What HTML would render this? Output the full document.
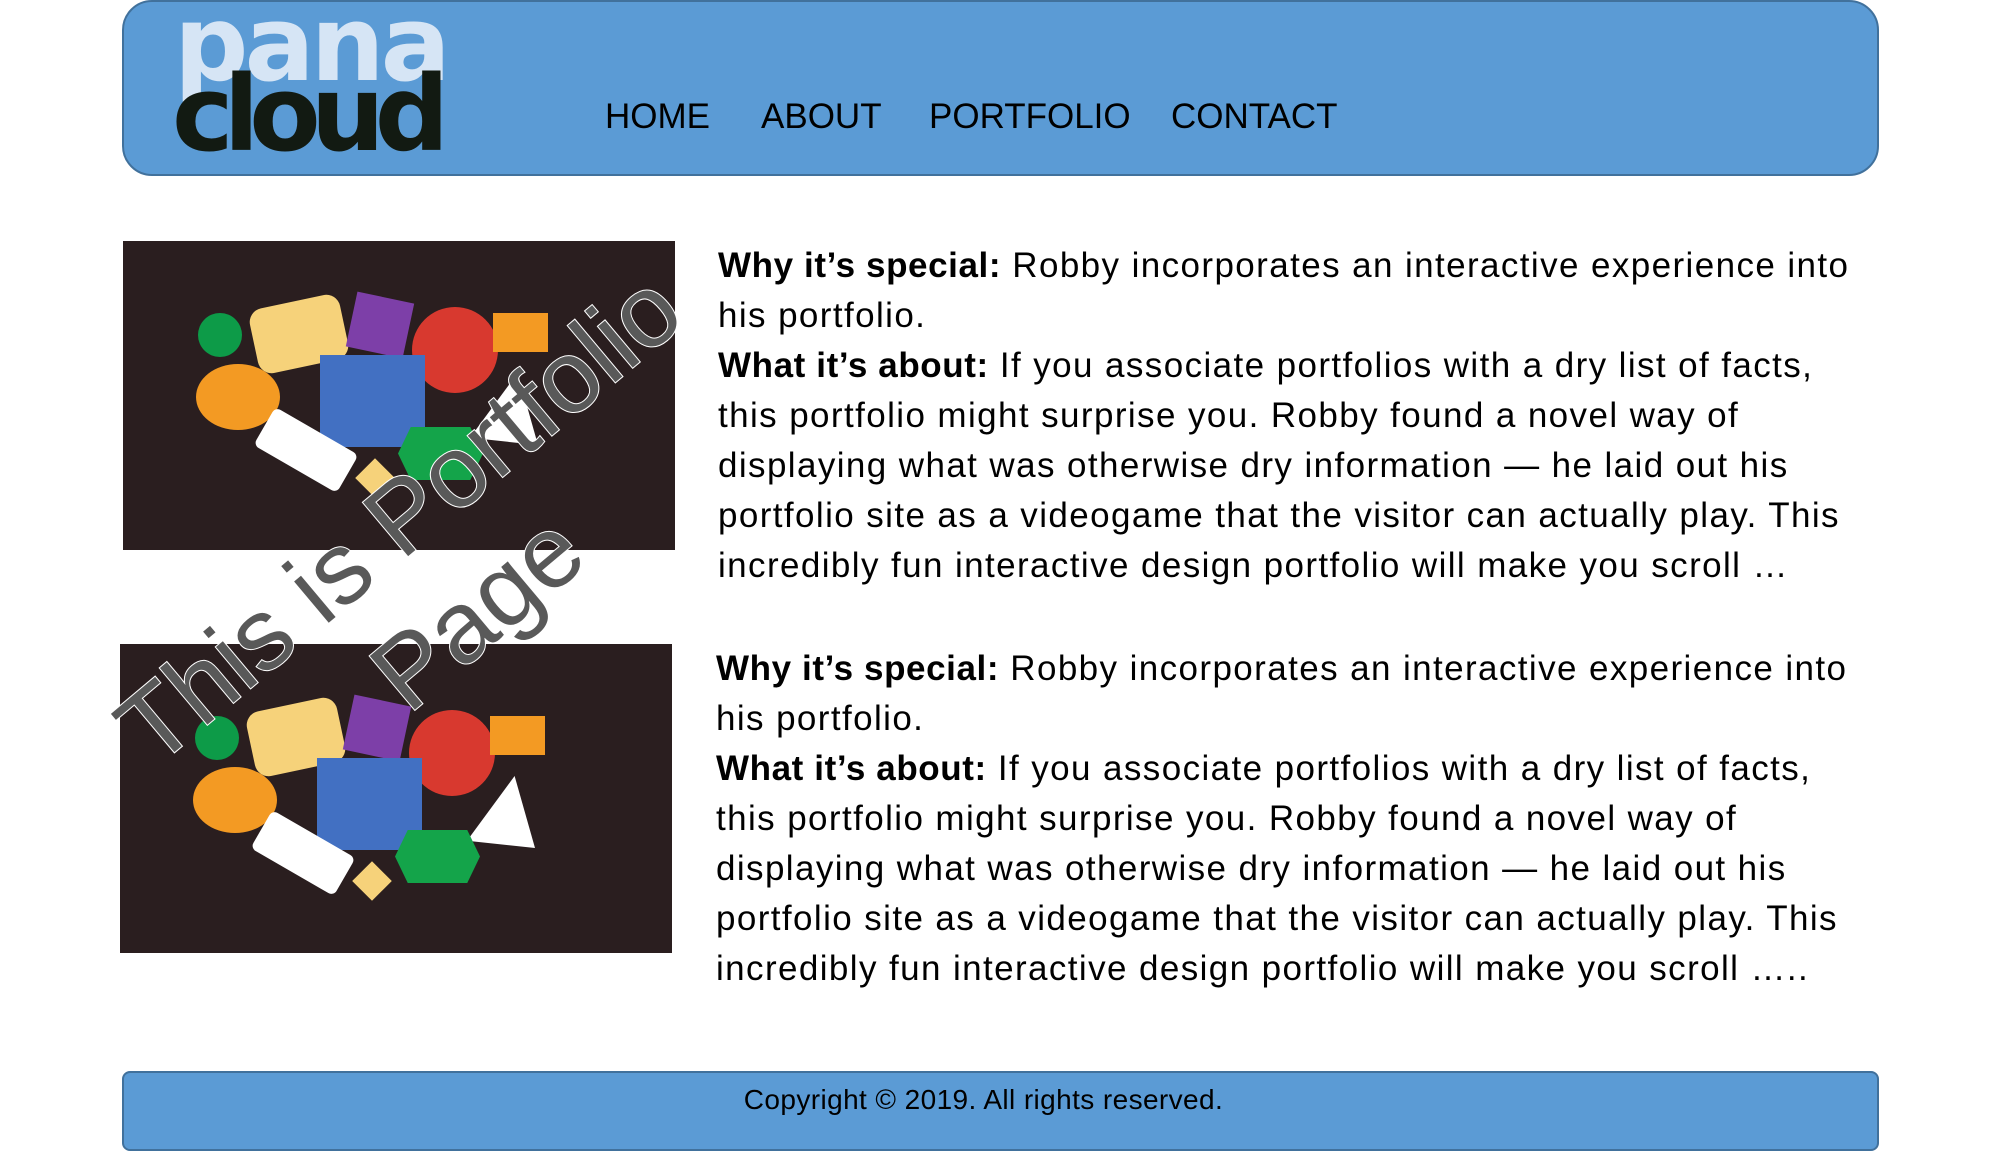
<!DOCTYPE html>
<html><head><meta charset="utf-8"><style>
*{margin:0;padding:0;box-sizing:border-box}
body{width:2000px;height:1125px;background:#fff;position:relative;overflow:hidden;font-family:"Liberation Sans",sans-serif;color:#000}
.hdr{position:absolute;left:122px;top:0;width:1757px;height:176px;background:#5b9bd5;border:2px solid #41719c;border-radius:30px}
.logo1,.logo2{position:absolute;font-family:"DejaVu Sans",sans-serif;font-weight:bold;line-height:1}
.logo1{left:174px;top:-8px;font-size:104px;color:#d6e5f5;letter-spacing:-4px}
.logo2{left:172px;top:62px;font-size:104px;color:#121a12;letter-spacing:-10px}
.nav{position:absolute;top:97px;font-size:35px;color:#000}
.img{position:absolute;width:552px;height:309px;background:#2a1e1f;overflow:hidden}
.img div{position:absolute}
.txt{position:absolute;font-size:35px;line-height:50px;white-space:nowrap;letter-spacing:1.4px}
.txt b{font-weight:bold;letter-spacing:0.6px}
.wm{position:absolute;left:438px;top:565px;transform:translate(-50%,-50%) rotate(-40deg);font-size:102px;line-height:122px;color:#595959;text-align:center;white-space:nowrap;-webkit-text-stroke:2px #fff;paint-order:stroke}
.ftr{position:absolute;left:122px;top:1071px;width:1757px;height:80px;background:#5b9bd5;border:2px solid #41719c;border-radius:8px;text-align:center;font-size:28px;line-height:54px;padding-right:34px;letter-spacing:0.4px}
</style></head><body>
<div class="hdr"></div>
<div class="logo1">pana</div>
<div class="logo2">cloud</div>
<div class="nav" style="left:605px">HOME</div>
<div class="nav" style="left:761px">ABOUT</div>
<div class="nav" style="left:929px">PORTFOLIO</div>
<div class="nav" style="left:1171px">CONTACT</div>

<div class="img" style="left:123px;top:241px">
<div style="left:75px;top:72px;width:44px;height:44px;border-radius:50%;background:#0d9b48"></div>
<div style="left:130px;top:60px;width:92px;height:66px;background:#f6d27a;transform:rotate(-12deg);border-radius:14px"></div>
<div style="left:228px;top:56px;width:58px;height:56px;background:#7d3fa8;transform:rotate(12deg)"></div>
<div style="left:289px;top:66px;width:86px;height:86px;border-radius:50%;background:#d8392f"></div>
<div style="left:370px;top:72px;width:55px;height:39px;background:#f39a23"></div>
<div style="left:73px;top:123px;width:84px;height:66px;border-radius:50%;background:#f39a23"></div>
<div style="left:197px;top:114px;width:105px;height:92px;background:#4270c2"></div>
<div style="left:135px;top:187px;width:96px;height:44px;background:#fff;border-radius:6px;transform:rotate(30deg)"></div>
<div style="left:347px;top:132px;width:68px;height:72px;background:#fff;clip-path:polygon(70% 0,100% 100%,0 90%)"></div>
<div style="left:275px;top:186px;width:85px;height:53px;background:#14a44a;clip-path:polygon(15% 0,85% 0,100% 50%,85% 100%,15% 100%,0 50%)"></div>
<div style="left:238px;top:223px;width:28px;height:28px;background:#f6d27a;transform:rotate(45deg)"></div>
</div>
<div class="img" style="left:120px;top:644px">
<div style="left:75px;top:72px;width:44px;height:44px;border-radius:50%;background:#0d9b48"></div>
<div style="left:130px;top:60px;width:92px;height:66px;background:#f6d27a;transform:rotate(-12deg);border-radius:14px"></div>
<div style="left:228px;top:56px;width:58px;height:56px;background:#7d3fa8;transform:rotate(12deg)"></div>
<div style="left:289px;top:66px;width:86px;height:86px;border-radius:50%;background:#d8392f"></div>
<div style="left:370px;top:72px;width:55px;height:39px;background:#f39a23"></div>
<div style="left:73px;top:123px;width:84px;height:66px;border-radius:50%;background:#f39a23"></div>
<div style="left:197px;top:114px;width:105px;height:92px;background:#4270c2"></div>
<div style="left:135px;top:187px;width:96px;height:44px;background:#fff;border-radius:6px;transform:rotate(30deg)"></div>
<div style="left:347px;top:132px;width:68px;height:72px;background:#fff;clip-path:polygon(70% 0,100% 100%,0 90%)"></div>
<div style="left:275px;top:186px;width:85px;height:53px;background:#14a44a;clip-path:polygon(15% 0,85% 0,100% 50%,85% 100%,15% 100%,0 50%)"></div>
<div style="left:238px;top:223px;width:28px;height:28px;background:#f6d27a;transform:rotate(45deg)"></div>
</div>

<div class="txt" style="left:718px;top:241px">
<b>Why it’s special:</b> Robby incorporates an interactive experience into<br>
his portfolio.<br>
<b>What it’s about:</b> If you associate portfolios with a dry list of facts,<br>
this portfolio might surprise you. Robby found a novel way of<br>
displaying what was otherwise dry information — he laid out his<br>
portfolio site as a videogame that the visitor can actually play. This<br>
incredibly fun interactive design portfolio will make you scroll …
</div>
<div class="txt" style="left:716px;top:644px">
<b>Why it’s special:</b> Robby incorporates an interactive experience into<br>
his portfolio.<br>
<b>What it’s about:</b> If you associate portfolios with a dry list of facts,<br>
this portfolio might surprise you. Robby found a novel way of<br>
displaying what was otherwise dry information — he laid out his<br>
portfolio site as a videogame that the visitor can actually play. This<br>
incredibly fun interactive design portfolio will make you scroll …..
</div>

<div class="wm">This is Portfolio<br>Page</div>

<div class="ftr">Copyright © 2019. All rights reserved.</div>
</body></html>
